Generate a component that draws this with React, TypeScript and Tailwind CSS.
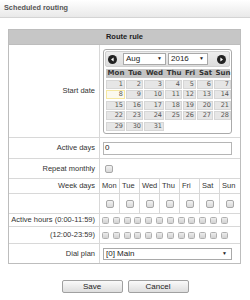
import React from "react";

const F = { fontFamily: '"Liberation Sans", Arial, sans-serif' };

function Circle({ dir }: { dir: "l" | "r" }) {
  return (
    <svg width="9" height="9" viewBox="0 0 9 9">
      <circle cx="4.5" cy="4.5" r="4.5" fill="#222" />
      {dir === "l" ? (
        <polygon points="3,4.5 5.6,2.6 5.6,6.4" fill="#fff" />
      ) : (
        <polygon points="6,4.5 3.4,2.6 3.4,6.4" fill="#fff" />
      )}
    </svg>
  );
}

function Sel({ text, w }: { text: string; w: string }) {
  return (
    <div className={`${w} h-[12px] bg-white border border-[#a9a9a9] flex items-center justify-between pl-[2px] pr-[3px] text-[8px] text-[#222]`}>
      <span>{text}</span>
      <span className="text-[5px]">▼</span>
    </div>
  );
}

function Box({ big }: { big?: boolean }) {
  return (
    <div
      className={
        big
          ? "w-[8px] h-[8px] rounded-[2px] border border-[#a8a8a8] bg-gradient-to-b from-[#f2f2f2] to-[#d8d8d8]"
          : "w-[7px] h-[7px] rounded-[1.5px] border border-[#b0b0b0] bg-gradient-to-b from-[#ececec] to-[#d2d2d2]"
      }
    />
  );
}

export default function App() {
  const days = ["Mon", "Tue", "Wed", "Thu", "Fri", "Sat", "Sun"];
  const cells: (number | null)[] = [];
  for (let i = 1; i <= 31; i++) cells.push(i);
  const cal = { fontFamily: '"DejaVu Sans", Verdana, sans-serif' };
  return (
    <div className="w-[250px] h-[300px] bg-white relative overflow-hidden" style={F}>
      <div className="h-[18px] border-b border-[#d4d4d4] bg-gradient-to-b from-[#ffffff] to-[#e9e9e9] flex items-center pl-[4px] text-[7.3px] font-bold text-[#555]">
        Scheduled routing
      </div>
      <div className="mt-[11px] ml-[8px] w-[233px] border border-[#bdbdbd] text-[7.5px] text-[#333]">
        <div className="h-[15px] bg-[#c6c6c6] border-b border-[#bdbdbd] flex items-center justify-center font-bold text-[#222]">
          Route rule
        </div>
        {/* Start date */}
        <div className="flex border-b border-[#d8d8d8] h-[93px]">
          <div className="w-[91px] border-r border-[#d8d8d8] flex items-center justify-end pr-[4px]">Start date</div>
          <div className="flex-1 pl-[3px] pt-[4px]">
            <div className="w-[129px] h-[85px] border border-[#aaaaaa] rounded-[3px] p-[1px]">
              <div className="h-[16px] bg-gradient-to-b from-[#ededed] to-[#dcdcdc] border border-[#d0d0d0] rounded-[2px] flex items-center pl-[2px] pr-[2px]">
                <Circle dir="l" />
                <div className="ml-[6px]"><Sel text="Aug" w="w-[43px]" /></div>
                <div className="ml-[2px]"><Sel text="2016" w="w-[40px]" /></div>
                <div className="ml-auto mr-[1px]"><Circle dir="r" /></div>
              </div>
              <div className="mt-[2px] ml-[1px]" style={cal}>
                <div className="grid grid-cols-[20px_18px_21px_18px_14px_17px_18px] bg-[#c4c4c4] h-[9px] text-[7px] font-bold text-[#333]">
                  {days.map((d) => (
                    <div key={d} className="flex items-center justify-center leading-none">{d}</div>
                  ))}
                </div>
                <div className="grid grid-cols-[20px_18px_21px_18px_14px_17px_18px] gap-y-[1.5px] mt-[1.5px] text-[6.5px] text-[#555]">
                  {cells.map((c, i) => (
                    <div key={i} className="pr-[1px]">
                      <div
                        className={
                          "h-[9px] flex items-center justify-end pr-[1px] leading-none border " +
                          (c === 8 ? "bg-[#fbf9ee] border-[#f5e7a0]" : "bg-[#e6e6e6] border-[#d6d6d6]")
                        }
                      >
                        {c}
                      </div>
                    </div>
                  ))}
                </div>
              </div>
            </div>
          </div>
        </div>
        {/* Active days */}
        <div className="flex border-b border-[#d8d8d8] h-[21px]">
          <div className="w-[91px] border-r border-[#d8d8d8] flex items-center justify-end pr-[4px]">Active days</div>
          <div className="flex-1 pl-[3px] flex items-center">
            <div className="w-[129px] h-[13px] border border-[#b5b5b5] flex items-center pl-[1px] text-[8px] text-[#222]">0</div>
          </div>
        </div>
        {/* Repeat monthly */}
        <div className="flex border-b border-[#d8d8d8] h-[20px]">
          <div className="w-[91px] border-r border-[#d8d8d8] flex items-center justify-end pr-[4px]">Repeat monthly</div>
          <div className="flex-1 pl-[5px] flex items-center">
            <Box big />
          </div>
        </div>
        {/* Week days */}
        <div className="flex border-b border-[#d8d8d8] h-[15px]">
          <div className="w-[91px] border-r border-[#d8d8d8] flex items-center justify-end pr-[4px]">Week days</div>
          <div className="flex-1 grid grid-cols-7">
            {days.map((d, i) => (
              <div key={d} className={"flex items-center pl-[2px] " + (i < 6 ? "border-r border-[#d8d8d8]" : "")}>{d}</div>
            ))}
          </div>
        </div>
        <div className="flex border-b border-[#d8d8d8] h-[20px]">
          <div className="w-[91px] border-r border-[#d8d8d8]" />
          <div className="flex-1 grid grid-cols-7">
            {days.map((d, i) => (
              <div key={d} className={"flex items-center justify-center " + (i < 6 ? "border-r border-[#d8d8d8]" : "")}>
                <Box big />
              </div>
            ))}
          </div>
        </div>
        {/* Active hours */}
        <div className="flex border-b border-[#d8d8d8] h-[13px]">
          <div className="w-[91px] border-r border-[#d8d8d8] flex items-center justify-end pr-[4px] whitespace-nowrap">Active hours (0:00-11:59)</div>
          <div className="flex-1 pl-[2px] flex items-center gap-[3.8px]">
            {Array.from({ length: 12 }).map((_, i) => (
              <Box key={i} />
            ))}
          </div>
        </div>
        <div className="flex border-b border-[#d8d8d8] h-[17px]">
          <div className="w-[91px] border-r border-[#d8d8d8] flex items-center justify-end pr-[4px]">(12:00-23:59)</div>
          <div className="flex-1 pl-[2px] flex items-center gap-[3.8px]">
            {Array.from({ length: 12 }).map((_, i) => (
              <Box key={i} />
            ))}
          </div>
        </div>
        {/* Dial plan */}
        <div className="flex h-[19px]">
          <div className="w-[91px] border-r border-[#d8d8d8] flex items-center justify-end pr-[4px]">Dial plan</div>
          <div className="flex-1 pl-[3px] flex items-center">
            <div className="w-[129px] h-[12px] border border-[#a9a9a9] flex items-center justify-between pl-[2px] pr-[4px] text-[8px] text-[#222]">
              <span>[0] Main</span>
              <span className="text-[5px]">▼</span>
            </div>
          </div>
        </div>
      </div>
      <div className="mt-[16px] flex justify-center gap-[5px] text-[8px] text-[#222]">
        <div className="w-[61px] h-[13px] border border-[#a0a0a0] rounded-[2px] bg-gradient-to-b from-[#fafafa] to-[#dedede] flex items-center justify-center">Save</div>
        <div className="w-[61px] h-[13px] border border-[#a0a0a0] rounded-[2px] bg-gradient-to-b from-[#fafafa] to-[#dedede] flex items-center justify-center">Cancel</div>
      </div>
    </div>
  );
}
